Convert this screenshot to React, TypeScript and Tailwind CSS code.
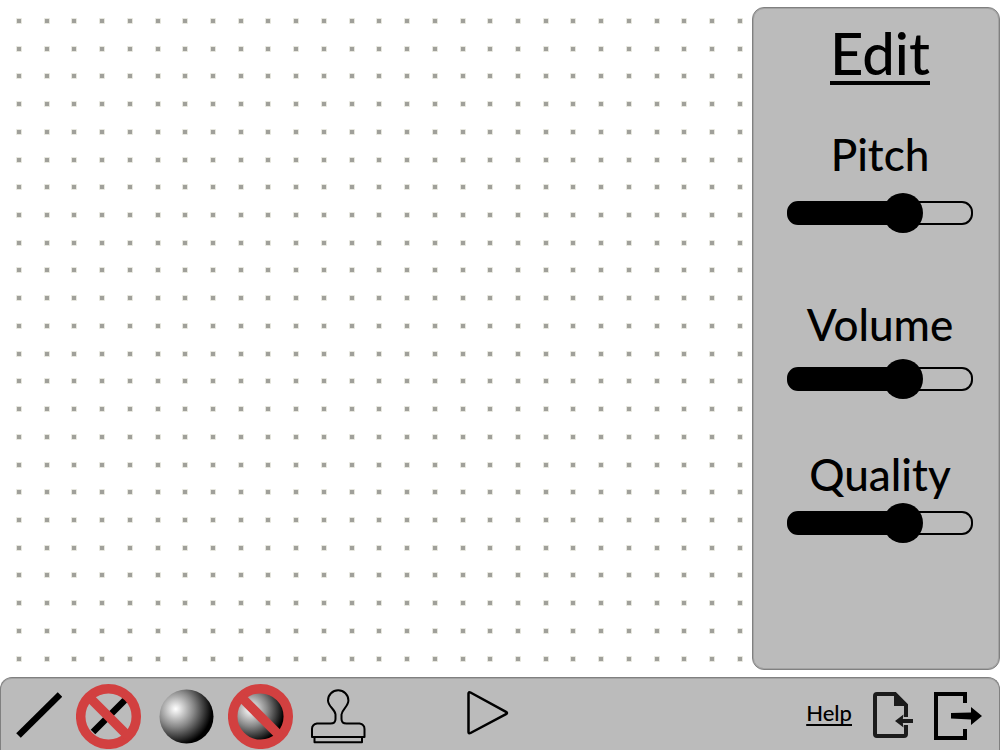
import { useId, useState } from "react";
import type { ReactNode } from "react";

const COLUMNS = 27;
const ROWS = 24;
const SPACING = 27.72;

function DotGrid() {
  const dots: ReactNode[] = [];
  for (let row = 0; row < ROWS; row++) {
    for (let col = 0; col < COLUMNS; col++) {
      const x = Math.round(17 + col * SPACING);
      const y = Math.round(19 + row * SPACING);
      dots.push(
        <g key={`${row}-${col}`}>
          <rect x={x - 1} y={y - 1} width="6" height="6" rx="1" fill="#e6e6de" />
          <rect x={x} y={y} width="4" height="4" fill="#a0a09a" />
        </g>
      );
    }
  }
  return (
    <svg
      className="block h-full w-full"
      viewBox="0 0 752 677"
      preserveAspectRatio="xMinYMin meet"
      role="img"
      aria-label="Drawing canvas"
    >
      {dots}
    </svg>
  );
}

function Slider({ label, initial, children }: { label: string; initial: number; children?: ReactNode }) {
  const id = useId();
  const [value, setValue] = useState(initial);
  const fill = `linear-gradient(to right, #000 ${value}%, transparent ${value}%)`;
  return (
    <div className="flex flex-col items-center">
      <label htmlFor={id} className="text-[44px] leading-[54px]">
        {label}
      </label>
      {children}
      <div className="flex h-10 items-center">
        <div className="h-6 w-[186px] rounded-[11px] border-2 border-black" style={{ background: fill }}>
          <input
            id={id}
            type="range"
            min={0}
            max={100}
            value={value}
            onChange={(e) => setValue(Number(e.target.value))}
            className="block h-5 w-full cursor-pointer appearance-none bg-transparent [&::-webkit-slider-runnable-track]:h-5 [&::-webkit-slider-runnable-track]:bg-transparent [&::-webkit-slider-thumb]:-mt-[10px] [&::-webkit-slider-thumb]:h-10 [&::-webkit-slider-thumb]:w-10 [&::-webkit-slider-thumb]:appearance-none [&::-webkit-slider-thumb]:rounded-full [&::-webkit-slider-thumb]:bg-black"
          />
        </div>
      </div>
    </div>
  );
}

function Tool({ label, children }: { label: string; children: ReactNode }) {
  return (
    <button type="button" aria-label={label} className="shrink-0 cursor-pointer">
      {children}
    </button>
  );
}

function Prohibited() {
  return (
    <g fill="none" stroke="#d24040" strokeWidth="9.5">
      <circle cx="32.5" cy="33.500" r="27.8" />
      <path d="M13 14 52 53" />
    </g>
  );
}

function Sphere({ id, cx, cy, r }: { id: string; cx: number; cy: number; r: number }) {
  return (
    <>
      <defs>
        <radialGradient id={id} cx="0.3" cy="0.36" r="0.67">
          <stop offset="0" stopColor="#fff" />
          <stop offset="0.12" stopColor="#e4e4e4" />
          <stop offset="0.5" stopColor="#888" />
          <stop offset="1" stopColor="#000" />
        </radialGradient>
      </defs>
      <circle cx={cx} cy={cy} r={r} fill={`url(#${id})`} />
    </>
  );
}

export default function App() {
  return (
    <div className="flex min-h-screen flex-col bg-white font-['Lato','Noto_Sans',sans-serif] font-medium text-black">
      <div className="flex flex-1">
        <main className="min-w-0 flex-1">
          <DotGrid />
        </main>
        <aside className="mt-[7px] mb-[7px] flex w-[248px] shrink-0 flex-col items-center rounded-xl border border-[#808080] bg-[#bbbbbb] pt-3 pb-6 pl-2 shadow-[inset_0_0_0_1px_#a3a3a3]">
          <h1 className="text-[58px] leading-[66px] font-medium underline decoration-4 underline-offset-[6px] [text-decoration-skip-ink:none]">
            Edit
          </h1>
          <div className="mt-[41px] flex flex-col">
            <Slider label="Pitch" initial={66}>
              <div className="h-3" />
            </Slider>
            <div className="mt-16 mb-12">
              <Slider label="Volume" initial={66}>
                <div className="h-2" />
              </Slider>
            </div>
            <Slider label="Quality" initial={66}>
              <div className="h-0.5" />
            </Slider>
          </div>
        </aside>
      </div>

      <footer className="flex h-[73px] shrink-0 items-center rounded-t-xl border-x border-t border-[#808080] bg-[#bbbbbb] px-[15px] pt-[3px] shadow-[inset_0_1px_0_0_#a3a3a3]">
        <div className="flex items-center gap-[14px]">
          <Tool label="Draw line">
            <svg className="block" width="46" height="66" viewBox="0 0 46 66">
              <path d="M2.500 52.500 44 11.500" stroke="#000" strokeWidth="6.5" />
            </svg>
          </Tool>
          <Tool label="Remove line">
            <svg className="block" width="66" height="66" viewBox="0 0 66 66">
              <path d="M17 49 51 15" stroke="#000" strokeWidth="6.5" />
              <Prohibited />
            </svg>
          </Tool>
          <Tool label="Add ball">
            <svg className="block" width="58" height="66" viewBox="0 0 58 66">
              <Sphere id="ball" cx={30.5} cy={33.5} r={27} />
            </svg>
          </Tool>
          <Tool label="Remove ball">
            <svg className="block" width="66" height="66" viewBox="0 0 66 66">
              <Sphere id="removed-ball" cx={32.5} cy={33.5} r={25} />
              <Prohibited />
            </svg>
          </Tool>
          <Tool label="Stamp">
            <svg className="block" width="60" height="66" viewBox="0 0 60 66" fill="none" stroke="#000" strokeWidth="2" strokeLinejoin="round">
              <path d="M4 54V46q0-4.500 5-5.500H22.500c3.500 0 5-2 5-4.500V31.500C27 26 20 23.500 20 17.500a10.200 10.200 0 0 1 20.400 0C40.400 23.500 34 26 33.500 31.500V36c0 2.500 1.500 4.500 5 4.500H51.500q5 1 5 5.500V54z" />
              <path d="M6.500 54v5.200h47.500V54" />
            </svg>
          </Tool>
        </div>

        <div className="ml-24">
          <Tool label="Play">
            <svg className="block" width="48" height="66" viewBox="0 0 48 66">
              <path d="M4.500 12.500v38.500q0 2 2 1L42 33.200q2-1.200 0-2.400L6.500 11.500q-2-1-2 1z" transform="translate(0 1)" fill="none" stroke="#000" strokeWidth="2.500" strokeLinejoin="round" />
            </svg>
          </Tool>
        </div>

        <div className="ml-auto flex items-center gap-5">
          <a href="#help" className="pb-[6px] text-[22px] leading-7 underline decoration-2 underline-offset-[3px] [text-decoration-skip-ink:none]">
            Help
          </a>
          <Tool label="Import file">
            <svg className="block" width="42" height="66" viewBox="0 0 42 66" fill="none" stroke="#1b1b1b">
              <path d="M34 34V22L23 11H5q-2 0-2 2V51q0 2 2 2H32q2 0 2-2V42" strokeWidth="4" />
              <path d="M22 9v14h14z" fill="#1b1b1b" stroke="none" />
              <path d="M41 38H29" strokeWidth="4" />
              <path d="M23 38 31.500 31.500 30.500 38 31.500 44.500z" fill="#1b1b1b" stroke="none" />
            </svg>
          </Tool>
          <Tool label="Exit">
            <svg className="block" width="50" height="66" viewBox="0 0 50 66" fill="none" stroke="#000">
              <path d="M31 20V11H2V55H31V46" strokeWidth="4" />
              <path d="M17 30 37 29.500V24L48 33 37 42V36.500L17 35.500z" fill="#000" stroke="none" />
            </svg>
          </Tool>
        </div>
      </footer>
    </div>
  );
}
